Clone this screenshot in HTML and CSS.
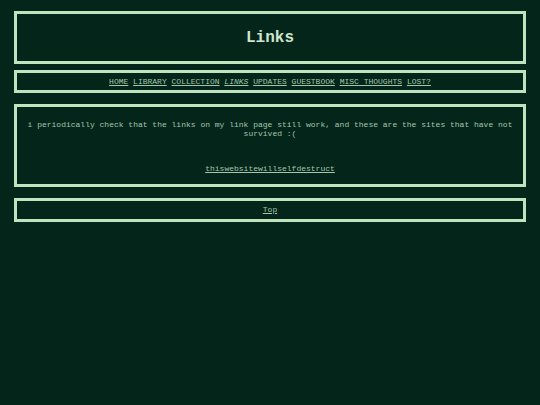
FILE: index.html
```html
<!DOCTYPE html>
<html>
<head>
<meta charset="utf-8">
<title>Links</title>
<link rel="stylesheet" href="styles.css">
</head>
<body>
<div class="page">
  <header class="box header">
    <h1 class="title">Links</h1>
  </header>
  <nav class="box nav">
    <a href="#">HOME</a> <a href="#">LIBRARY</a> <a href="#">COLLECTION</a> <a href="#" class="current">LINKS</a> <a href="#">UPDATES</a> <a href="#">GUESTBOOK</a> <a href="#">MISC THOUGHTS</a> <a href="#">LOST?</a>
  </nav>
  <main class="box content">
    <p class="intro">i periodically check that the links on my link page still work, and these are the sites that have not survived :(</p>
    <p class="dead"><a href="#">thiswebsitewillselfdestruct</a></p>
  </main>
  <footer class="box footer">
    <a href="#">Top</a>
  </footer>
</div>
</body>
</html>
```
FILE: styles.css
```css
html, body {
  margin: 0;
  padding: 0;
  background: #04251a;
}
body {
  font-family: "Liberation Mono", "Courier New", monospace;
  font-size: 8px;
  color: #a3c6ab;
}
.page {
  padding: 11px 14px;
  display: flex;
  flex-direction: column;
}
.box {
  border: 3px solid #bfe3bf;
  text-align: center;
}
a {
  color: #a3c6ab;
  text-decoration: underline;
}
.header {
  height: 47px;
  display: flex;
  align-items: center;
  justify-content: center;
}
.title {
  margin: 0;
  font-size: 16px;
  font-weight: bold;
  color: #cfe6cf;
  line-height: 18px;
}
.nav {
  margin-top: 6px;
  height: 17px;
  line-height: 17px;
}
.current {
  font-style: italic;
}
.content {
  margin-top: 11px;
  padding: 13px 6px 11px;
}
.content p {
  margin: 0;
  line-height: 9px;
}
.intro {
  padding-bottom: 26px;
}
.footer {
  margin-top: 11px;
  height: 18px;
  line-height: 18px;
}
```
